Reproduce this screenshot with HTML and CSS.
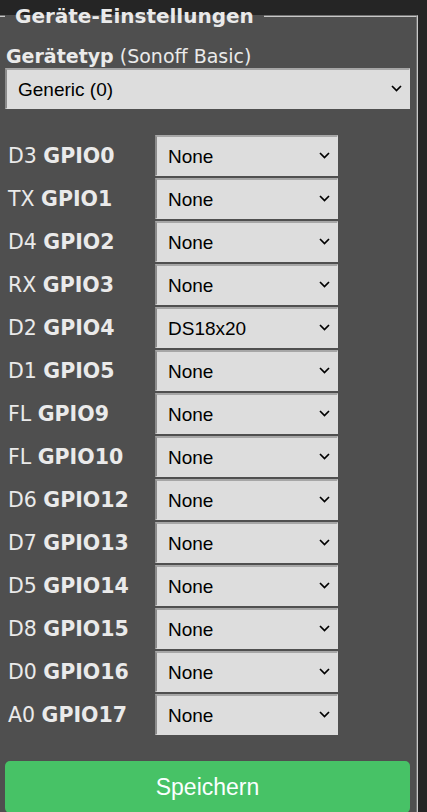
FILE: index.html
```html
<!DOCTYPE html>
<html lang="de">
<head>
<meta charset="utf-8">
<title>Geräte-Einstellungen</title>
<link rel="stylesheet" href="styles.css">
</head>
<body>
<fieldset class="panel">
  <legend class="panel-title"><b>&nbsp;Geräte-Einstellungen&nbsp;</b></legend>
  <form class="config">
    <div class="type-label"><b>Gerätetyp</b> (Sonoff Basic)</div>
    <div class="select-wrap">
      <select class="sel"><option>Generic (0)</option></select>
      <svg class="chev" width="11" height="7" viewBox="0 0 11 7"><path d="M1 1 L5.5 5.5 L10 1" fill="none" stroke="#000" stroke-width="1.7"/></svg>
    </div>
    <div class="gpio-grid">
      <div class="gpio-label">D3 <b>GPIO0</b></div>
      <div class="select-wrap"><select class="sel"><option>None</option></select><svg class="chev" width="11" height="7" viewBox="0 0 11 7"><path d="M1 1 L5.5 5.5 L10 1" fill="none" stroke="#000" stroke-width="1.7"/></svg></div>
      <div class="gpio-label">TX <b>GPIO1</b></div>
      <div class="select-wrap"><select class="sel"><option>None</option></select><svg class="chev" width="11" height="7" viewBox="0 0 11 7"><path d="M1 1 L5.5 5.5 L10 1" fill="none" stroke="#000" stroke-width="1.7"/></svg></div>
      <div class="gpio-label">D4 <b>GPIO2</b></div>
      <div class="select-wrap"><select class="sel"><option>None</option></select><svg class="chev" width="11" height="7" viewBox="0 0 11 7"><path d="M1 1 L5.5 5.5 L10 1" fill="none" stroke="#000" stroke-width="1.7"/></svg></div>
      <div class="gpio-label">RX <b>GPIO3</b></div>
      <div class="select-wrap"><select class="sel"><option>None</option></select><svg class="chev" width="11" height="7" viewBox="0 0 11 7"><path d="M1 1 L5.5 5.5 L10 1" fill="none" stroke="#000" stroke-width="1.7"/></svg></div>
      <div class="gpio-label">D2 <b>GPIO4</b></div>
      <div class="select-wrap"><select class="sel"><option>DS18x20</option></select><svg class="chev" width="11" height="7" viewBox="0 0 11 7"><path d="M1 1 L5.5 5.5 L10 1" fill="none" stroke="#000" stroke-width="1.7"/></svg></div>
      <div class="gpio-label">D1 <b>GPIO5</b></div>
      <div class="select-wrap"><select class="sel"><option>None</option></select><svg class="chev" width="11" height="7" viewBox="0 0 11 7"><path d="M1 1 L5.5 5.5 L10 1" fill="none" stroke="#000" stroke-width="1.7"/></svg></div>
      <div class="gpio-label">FL <b>GPIO9</b></div>
      <div class="select-wrap"><select class="sel"><option>None</option></select><svg class="chev" width="11" height="7" viewBox="0 0 11 7"><path d="M1 1 L5.5 5.5 L10 1" fill="none" stroke="#000" stroke-width="1.7"/></svg></div>
      <div class="gpio-label">FL <b>GPIO10</b></div>
      <div class="select-wrap"><select class="sel"><option>None</option></select><svg class="chev" width="11" height="7" viewBox="0 0 11 7"><path d="M1 1 L5.5 5.5 L10 1" fill="none" stroke="#000" stroke-width="1.7"/></svg></div>
      <div class="gpio-label">D6 <b>GPIO12</b></div>
      <div class="select-wrap"><select class="sel"><option>None</option></select><svg class="chev" width="11" height="7" viewBox="0 0 11 7"><path d="M1 1 L5.5 5.5 L10 1" fill="none" stroke="#000" stroke-width="1.7"/></svg></div>
      <div class="gpio-label">D7 <b>GPIO13</b></div>
      <div class="select-wrap"><select class="sel"><option>None</option></select><svg class="chev" width="11" height="7" viewBox="0 0 11 7"><path d="M1 1 L5.5 5.5 L10 1" fill="none" stroke="#000" stroke-width="1.7"/></svg></div>
      <div class="gpio-label">D5 <b>GPIO14</b></div>
      <div class="select-wrap"><select class="sel"><option>None</option></select><svg class="chev" width="11" height="7" viewBox="0 0 11 7"><path d="M1 1 L5.5 5.5 L10 1" fill="none" stroke="#000" stroke-width="1.7"/></svg></div>
      <div class="gpio-label">D8 <b>GPIO15</b></div>
      <div class="select-wrap"><select class="sel"><option>None</option></select><svg class="chev" width="11" height="7" viewBox="0 0 11 7"><path d="M1 1 L5.5 5.5 L10 1" fill="none" stroke="#000" stroke-width="1.7"/></svg></div>
      <div class="gpio-label">D0 <b>GPIO16</b></div>
      <div class="select-wrap"><select class="sel"><option>None</option></select><svg class="chev" width="11" height="7" viewBox="0 0 11 7"><path d="M1 1 L5.5 5.5 L10 1" fill="none" stroke="#000" stroke-width="1.7"/></svg></div>
      <div class="gpio-label">A0 <b>GPIO17</b></div>
      <div class="select-wrap"><select class="sel"><option>None</option></select><svg class="chev" width="11" height="7" viewBox="0 0 11 7"><path d="M1 1 L5.5 5.5 L10 1" fill="none" stroke="#000" stroke-width="1.7"/></svg></div>
    </div>
    <button type="button" class="save">Speichern</button>
  </form>
</fieldset>
</body>
</html>
```

FILE: styles.css
```css
html, body {
  margin: 0;
  padding: 0;
  background: #252525;
  overflow: hidden;
}

body {
  font-family: "DejaVu Sans", Verdana, sans-serif;
  font-size: 20px;
  color: #eaeaea;
}

.panel {
  margin: 5px 9px 0 -4px;
  padding: 17px 6px 20px 7px;
  background: #4f4f4f;
  border: 2px groove #c8c8c8;
  min-width: 0;
}

.panel-title {
  padding: 0 3px;
  line-height: 22px;
  font-size: 20px;
  color: #eaeaea;
}

.config {
  margin: 0;
}

.type-label {
  line-height: 24px;
  font-size: 19px;
  padding-left: 1px;
}

.select-wrap {
  position: relative;
  height: 41px;
}

.sel {
  -webkit-appearance: none;
  appearance: none;
  display: block;
  width: 100%;
  height: 41px;
  box-sizing: border-box;
  margin: 0;
  padding: 0 24px 0 11px;
  background: #dddddd;
  color: #000;
  font-family: "Liberation Sans", Arial, sans-serif;
  font-size: 19px;
  border-style: solid;
  border-width: 2px 1px 1px 2px;
  border-color: #a6a6a6 #dddddd #dddddd #8c8c8c;
  border-radius: 0;
  outline: none;
}

.chev {
  position: absolute;
  right: 8px;
  top: 17px;
  pointer-events: none;
}

.gpio-grid {
  display: grid;
  grid-template-columns: 150px 183px;
  row-gap: 2px;
  margin-top: 26px;
}

.gpio-label {
  display: flex;
  align-items: center;
  padding-left: 3px;
  white-space: pre;
  font-size: 20.5px;
}

.save {
  display: block;
  width: 100%;
  height: 52px;
  margin-top: 26px;
  border: 0;
  border-radius: 5px;
  background: #47c266;
  color: #faffff;
  font-family: "Liberation Sans", Arial, sans-serif;
  font-size: 23px;
  cursor: pointer;
}
```
